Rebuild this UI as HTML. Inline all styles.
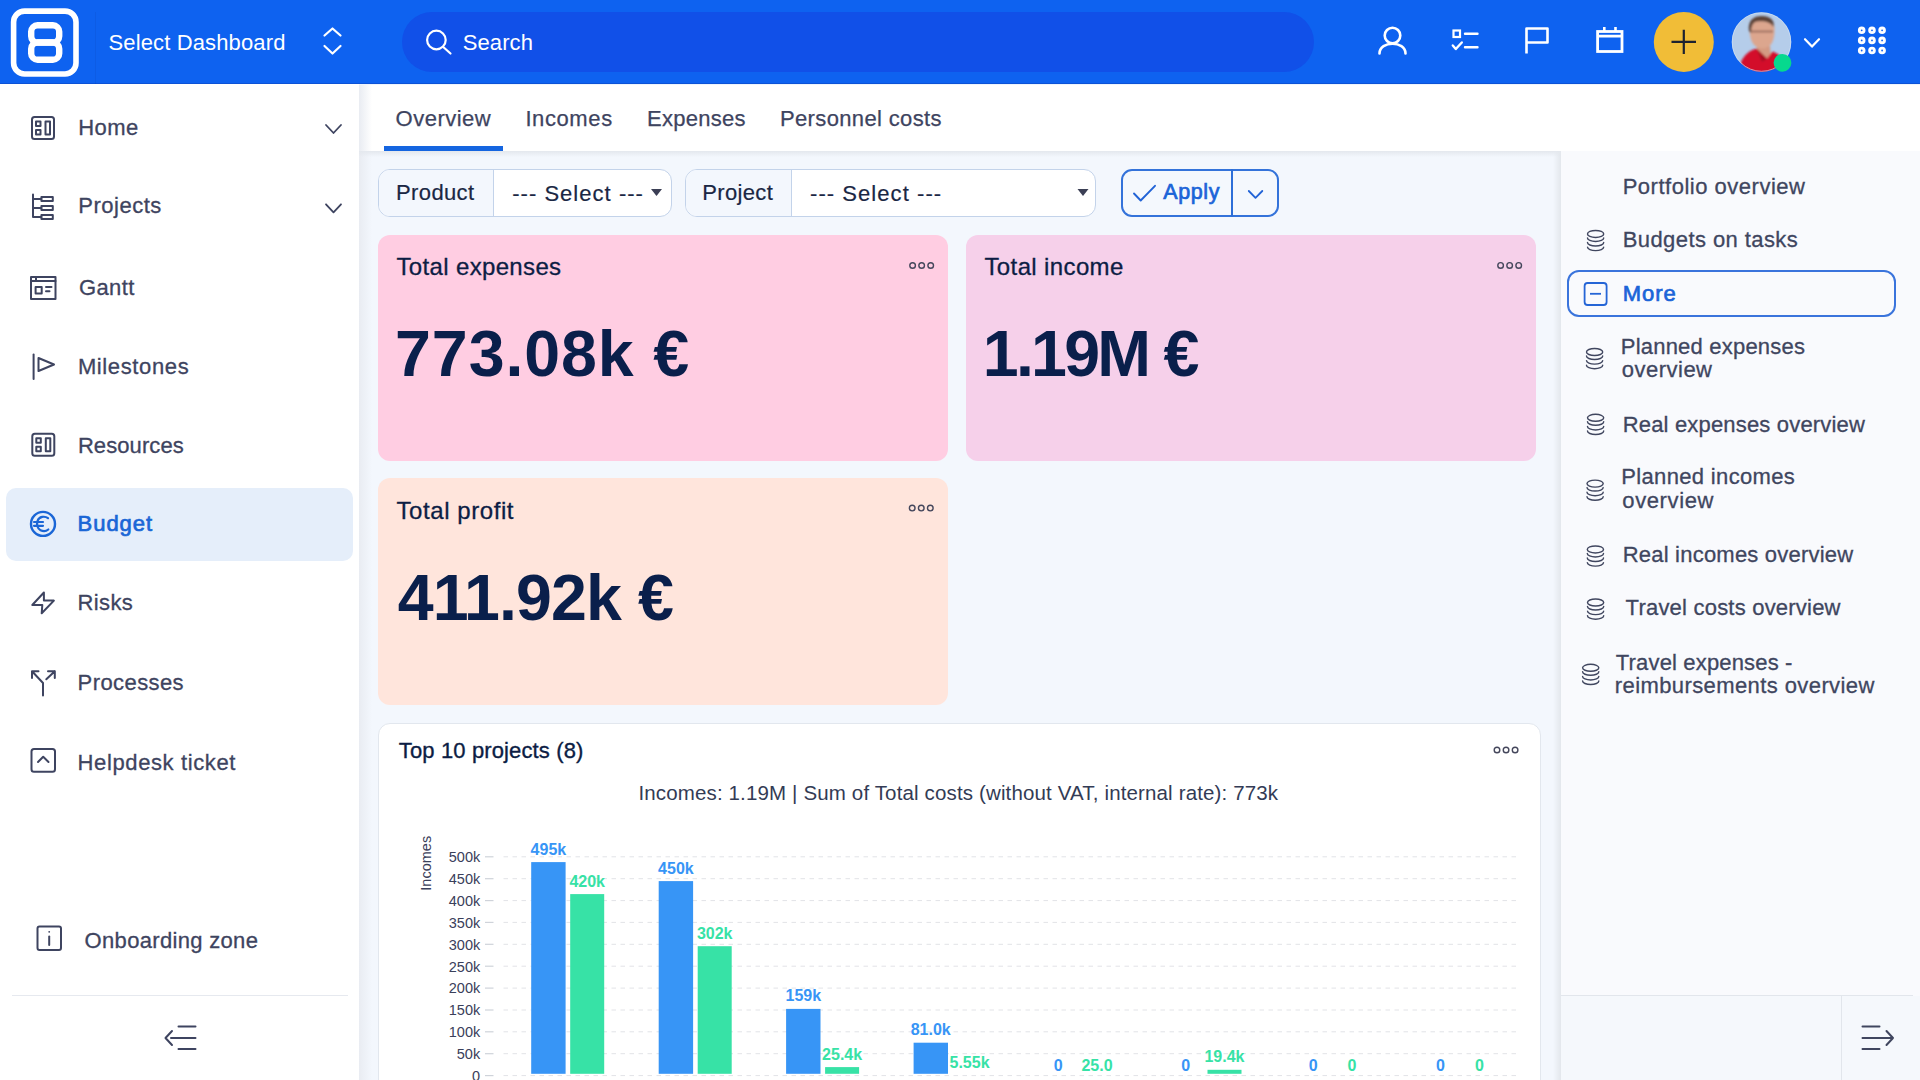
<!DOCTYPE html>
<html><head><meta charset="utf-8"><title>Budget Overview</title>
<style>
html,body{margin:0;padding:0;width:1920px;height:1080px;overflow:hidden;background:#f2f6fc;font-family:"Liberation Sans", sans-serif;}
.t{position:absolute;white-space:nowrap;line-height:1;}
.r{position:absolute;}
.s{position:absolute;overflow:visible;}
</style></head><body>
<div class="r" style="left:0px;top:84px;width:359px;height:996px;background:#ffffff;"></div><div class="r" style="left:359px;top:84px;width:1561px;height:67px;background:#ffffff;"></div><div class="r" style="left:359px;top:151px;width:1202px;height:929px;background:#f3f7fd;"></div><div class="r" style="left:1561px;top:151px;width:359px;height:929px;background:#f9fafd;"></div><div class="r" style="left:359px;top:84px;width:13px;height:996px;background:linear-gradient(90deg,#e9ecf2,rgba(242,246,252,0));"></div><div class="r" style="left:1553px;top:151px;width:8px;height:929px;background:linear-gradient(90deg,rgba(230,234,240,0),#e3e7ec);"></div><div class="r" style="left:0px;top:0px;width:1920px;height:84px;background:#0e62f0;"></div><div class="r" style="left:402px;top:12px;width:912px;height:60px;background:#1150e8;border-radius:30px;"></div><div class="r" style="left:0px;top:83px;width:1920px;height:1px;background:#0c52d6;"></div><div class="r" style="left:359px;top:84px;width:1561px;height:1px;background:#eef4fd;"></div><div class="r" style="left:95px;top:12px;width:1px;height:72px;background:rgba(0,20,90,0.07);"></div><svg class="s" style="left:0px;top:0px;" width="1920" height="84" viewBox="0 0 1920 84" fill="none"><rect x="13.6" y="11.1" width="62.4" height="62.9" rx="11" stroke="#fff" stroke-width="5.6"/><rect x="31.2" y="25.3" width="28" height="17.2" rx="6.3" stroke="#fff" stroke-width="6.4"/><rect x="31.2" y="42.5" width="28" height="17.2" rx="6.3" stroke="#fff" stroke-width="6.4"/><path d="M324.5 35.5 L332.5 28.5 L340.5 35.5 M324.5 46 L332.5 53.5 L340.5 46" stroke="#fff" stroke-width="2.2" stroke-linecap="round" stroke-linejoin="round"/><circle cx="436.4" cy="40" r="9.3" stroke="#fff" stroke-width="2.2"/><path d="M443.5 47.3 L450.5 53.5" stroke="#fff" stroke-width="2.2" stroke-linecap="round"/><circle cx="1392.5" cy="35.5" r="7.8" stroke="#fff" stroke-width="2.6"/><path d="M1379.5 53.5 C1379.5 40.5 1405.5 40.5 1405.5 53.5" stroke="#fff" stroke-width="2.6" stroke-linecap="round"/><rect x="1453.5" y="30.5" width="6.5" height="6.5" stroke="#fff" stroke-width="2.2"/><path d="M1465 33.8 H1477.5 M1465 47.2 H1477.5" stroke="#fff" stroke-width="2.4" stroke-linecap="round"/><path d="M1452.8 45.5 L1455.8 49 L1461.8 42.5" stroke="#fff" stroke-width="2.4" stroke-linecap="round" stroke-linejoin="round"/><path d="M1526.5 53.5 V28.5 H1547.5 V42.5 H1526.5" stroke="#fff" stroke-width="2.6" stroke-linejoin="round"/><rect x="1597.6" y="31.5" width="24.4" height="20" stroke="#fff" stroke-width="2.8"/><path d="M1598 36.1 H1622 M1604.3 27 V31 M1615.5 27 V31" stroke="#fff" stroke-width="2.6"/><circle cx="1683.8" cy="41.9" r="30" fill="#f1bd37"/><path d="M1671.5 41.9 H1696 M1683.8 29.7 V54.1" stroke="#1d2230" stroke-width="2.2"/><defs><clipPath id="av"><circle cx="1761.5" cy="42" r="29.8"/></clipPath></defs><defs><filter id="blr" x="-20%" y="-20%" width="140%" height="140%"><feGaussianBlur stdDeviation="0.9"/></filter></defs><g clip-path="url(#av)"><rect x="1730" y="10" width="64" height="64" fill="#b5cdea"/><g filter="url(#blr)"><path d="M1757 46 L1770 46 L1771 58 L1757 58 Z" fill="#d49a82"/><path d="M1749.5 30 C1749 20 1755 17 1762 17 C1770 17 1775 21 1774.5 30 C1774.5 40 1772 48 1762.5 48.5 C1753 48.5 1750 40 1749.5 30 Z" fill="#dca68e"/><path d="M1749 31 C1747.5 20 1754 15.8 1762 16 C1770 16.2 1775 20 1773.5 27 C1771 22 1764 20.5 1757 21.5 C1753 22 1751 26 1751 33 Z" fill="#5b4339"/><path d="M1751 31.5 H1773" stroke="#7a5246" stroke-width="1.6" opacity="0.8"/><path d="M1740 74 L1741 62 C1744 55 1750 50 1756.5 48.5 L1767 58.5 L1772.5 51.5 C1778 53 1783 58 1786 64 L1786 74 Z" fill="#d3112c"/><path d="M1756.5 48.5 L1767 58.5 L1762 62 Z" fill="#a80c22"/></g><circle cx="1761.5" cy="42" r="29.3" stroke="#cfe0f5" stroke-width="1" fill="none" opacity="0.7"/></g><circle cx="1782.5" cy="62.8" r="8.9" fill="#06d98e"/><path d="M1805 39.2 L1812 46.6 L1819 39.2" stroke="#fff" stroke-width="2.2" stroke-linecap="round" stroke-linejoin="round"/><circle cx="1861.7" cy="30.3" r="2.35" stroke="#fff" stroke-width="2.9"/><circle cx="1861.7" cy="40.4" r="2.35" stroke="#fff" stroke-width="2.9"/><circle cx="1861.7" cy="50.5" r="2.35" stroke="#fff" stroke-width="2.9"/><circle cx="1872" cy="30.3" r="2.35" stroke="#fff" stroke-width="2.9"/><circle cx="1872" cy="40.4" r="2.35" stroke="#fff" stroke-width="2.9"/><circle cx="1872" cy="50.5" r="2.35" stroke="#fff" stroke-width="2.9"/><circle cx="1882.1" cy="30.3" r="2.35" stroke="#fff" stroke-width="2.9"/><circle cx="1882.1" cy="40.4" r="2.35" stroke="#fff" stroke-width="2.9"/><circle cx="1882.1" cy="50.5" r="2.35" stroke="#fff" stroke-width="2.9"/></svg><div class="t" style="left:108.50px;top:31.88px;font-size:22px;color:#ffffff;font-weight:400;letter-spacing:0.133px;">Select Dashboard</div><div class="t" style="left:462.70px;top:31.58px;font-size:22px;color:#ffffff;font-weight:400;letter-spacing:0.100px;">Search</div><div class="r" style="left:6px;top:488px;width:347px;height:73px;background:#e5eefa;border-radius:10px;"></div><div class="t" style="left:78.30px;top:117.38px;font-size:22px;color:#3e4460;font-weight:400;letter-spacing:0.400px;-webkit-text-stroke:0.3px #3e4460;">Home</div><div class="t" style="left:78.30px;top:195.48px;font-size:22px;color:#3e4460;font-weight:400;letter-spacing:0.500px;-webkit-text-stroke:0.3px #3e4460;">Projects</div><div class="t" style="left:78.90px;top:277.28px;font-size:22px;color:#3e4460;font-weight:400;letter-spacing:0.425px;-webkit-text-stroke:0.3px #3e4460;">Gantt</div><div class="t" style="left:77.90px;top:355.88px;font-size:22px;color:#3e4460;font-weight:400;letter-spacing:0.622px;-webkit-text-stroke:0.3px #3e4460;">Milestones</div><div class="t" style="left:77.90px;top:434.88px;font-size:22px;color:#3e4460;font-weight:400;letter-spacing:0.087px;-webkit-text-stroke:0.3px #3e4460;">Resources</div><div class="t" style="left:77.60px;top:513.38px;font-size:22px;color:#1a66d6;font-weight:400;letter-spacing:0.960px;-webkit-text-stroke:0.7px #1a66d6;">Budget</div><div class="t" style="left:77.60px;top:591.88px;font-size:22px;color:#3e4460;font-weight:400;letter-spacing:0.350px;-webkit-text-stroke:0.3px #3e4460;">Risks</div><div class="t" style="left:77.60px;top:671.68px;font-size:22px;color:#3e4460;font-weight:400;letter-spacing:0.413px;-webkit-text-stroke:0.3px #3e4460;">Processes</div><div class="t" style="left:77.60px;top:751.88px;font-size:22px;color:#3e4460;font-weight:400;letter-spacing:0.614px;-webkit-text-stroke:0.3px #3e4460;">Helpdesk ticket</div><div class="t" style="left:84.60px;top:930.08px;font-size:22px;color:#3e4460;font-weight:400;letter-spacing:0.321px;-webkit-text-stroke:0.3px #3e4460;">Onboarding zone</div><svg class="s" style="left:0px;top:84px;" width="359" height="996" viewBox="0 84 359 996" fill="none"><rect x="32" y="117" width="22" height="22" rx="2.5" stroke="#3e4460" stroke-width="2" stroke-linecap="round" stroke-linejoin="round"/><rect x="36" y="121.5" width="4.5" height="4.5" stroke="#3e4460" stroke-width="2" stroke-linecap="round" stroke-linejoin="round"/><rect x="36" y="130" width="4.5" height="4.5" stroke="#3e4460" stroke-width="2" stroke-linecap="round" stroke-linejoin="round"/><rect x="45.5" y="121.5" width="4.5" height="13" stroke="#3e4460" stroke-width="2" stroke-linecap="round" stroke-linejoin="round"/><rect x="32.3" y="433.7" width="22" height="22" rx="2.5" stroke="#3e4460" stroke-width="2" stroke-linecap="round" stroke-linejoin="round"/><rect x="36.3" y="438.2" width="4.5" height="4.5" stroke="#3e4460" stroke-width="2" stroke-linecap="round" stroke-linejoin="round"/><rect x="36.3" y="446.7" width="4.5" height="4.5" stroke="#3e4460" stroke-width="2" stroke-linecap="round" stroke-linejoin="round"/><rect x="45.8" y="438.2" width="4.5" height="13" stroke="#3e4460" stroke-width="2" stroke-linecap="round" stroke-linejoin="round"/><path d="M33 194.5 V217 H41.4 M33 199 H41.4 M33 208 H41.4" stroke="#3e4460" stroke-width="2" stroke-linecap="round" stroke-linejoin="round"/><rect x="41.4" y="197" width="11.4" height="4" stroke="#3e4460" stroke-width="2" stroke-linecap="round" stroke-linejoin="round"/><rect x="41.4" y="206" width="11.4" height="4" stroke="#3e4460" stroke-width="2" stroke-linecap="round" stroke-linejoin="round"/><rect x="41.4" y="215.1" width="11.4" height="3.8" stroke="#3e4460" stroke-width="2" stroke-linecap="round" stroke-linejoin="round"/><rect x="31" y="277" width="24.5" height="22" stroke="#3e4460" stroke-width="2" stroke-linecap="round" stroke-linejoin="round"/><path d="M31 281 H55.5 M36 277 V281" stroke="#3e4460" stroke-width="2" stroke-linecap="round" stroke-linejoin="round"/><rect x="35.6" y="287" width="6.1" height="6.4" stroke="#3e4460" stroke-width="2" stroke-linecap="round" stroke-linejoin="round"/><path d="M46 286.9 H51.5 M46 291.3 H49.5" stroke="#3e4460" stroke-width="2" stroke-linecap="round"/><path d="M33.6 354.5 V379" stroke="#3e4460" stroke-width="2" stroke-linecap="round" stroke-linejoin="round"/><path d="M38.5 358 L54 364.5 L38.5 371 Z" stroke="#3e4460" stroke-width="2" stroke-linecap="round" stroke-linejoin="round"/><circle cx="43" cy="523.9" r="12" stroke="#1a66d6" stroke-width="2.4"/><path d="M48 518.2 C45 515.8 39 516.2 37.5 521 C36.5 524 37 528.5 40.5 530.2 C43 531.4 46.5 531 48.3 529.5 M34 522 H43 M34 525.8 H43" stroke="#1a66d6" stroke-width="2.2" stroke-linecap="round"/><path d="M43.9 592.5 L32.3 605 H42.3 L41.7 613.3 L53.9 600.6 H43.9 Z" stroke="#3e4460" stroke-width="2" stroke-linecap="round" stroke-linejoin="round"/><path d="M43 695.5 V683 L32 671.3 M32 678 V671.3 H38.5 M46.3 679.3 L54.8 671.3 M48 671.3 H54.8 V678" stroke="#3e4460" stroke-width="2" stroke-linecap="round" stroke-linejoin="round"/><rect x="31.5" y="749" width="23.5" height="22.7" rx="2.5" stroke="#3e4460" stroke-width="2" stroke-linecap="round" stroke-linejoin="round"/><path d="M38 762 L43.2 756.8 L48.5 762" stroke="#3e4460" stroke-width="2" stroke-linecap="round" stroke-linejoin="round"/><rect x="37.5" y="926.5" width="23.5" height="23.5" rx="2" stroke="#3e4460" stroke-width="2" stroke-linecap="round" stroke-linejoin="round"/><path d="M49.2 936.5 V945" stroke="#3e4460" stroke-width="2" stroke-linecap="round" stroke-linejoin="round"/><circle cx="49.2" cy="931.8" r="0.9" fill="#3e4460"/><path d="M326 125 L333.5 133 L341 125 M326 204.3 L333.5 212.3 L341 204.3" stroke="#3e4460" stroke-width="1.8" stroke-linecap="round" stroke-linejoin="round"/><path d="M178.5 1026.5 H195.5 M171 1038 H195.5 M178.5 1049 H195.5 M172 1031 L165.5 1038 L172 1045" stroke="#3e4460" stroke-width="2" stroke-linecap="round" stroke-linejoin="round"/></svg><div class="r" style="left:12px;top:995px;width:336px;height:1px;background:#e6e9ef;"></div><div class="t" style="left:395.60px;top:107.88px;font-size:22px;color:#3e4460;font-weight:400;letter-spacing:0.486px;-webkit-text-stroke:0.25px #3e4460;">Overview</div><div class="t" style="left:525.40px;top:107.88px;font-size:22px;color:#3e4460;font-weight:400;letter-spacing:0.600px;-webkit-text-stroke:0.25px #3e4460;">Incomes</div><div class="t" style="left:647.00px;top:107.88px;font-size:22px;color:#3e4460;font-weight:400;letter-spacing:0.286px;-webkit-text-stroke:0.25px #3e4460;">Expenses</div><div class="t" style="left:780.00px;top:107.88px;font-size:22px;color:#3e4460;font-weight:400;letter-spacing:0.357px;-webkit-text-stroke:0.25px #3e4460;">Personnel costs</div><div class="r" style="left:359px;top:151px;width:1202px;height:6px;background:linear-gradient(#e4e8ee,rgba(243,247,253,0));"></div><div class="r" style="left:384px;top:146px;width:119px;height:5px;background:#1565e0;"></div><div class="r" style="left:378px;top:169px;width:292px;height:46px;border:1px solid #c3d3ea;border-radius:12px;background:#fff;overflow:hidden;"><div style="position:absolute;left:0;top:0;width:114.39999999999998px;height:46px;background:#f3f7fd;border-right:1px solid #c3d3ea;"></div></div><div class="t" style="left:396.00px;top:182.28px;font-size:22px;color:#1a2744;font-weight:400;letter-spacing:0.383px;-webkit-text-stroke:0.2px #1a2744;">Product</div><div class="t" style="left:512.20px;top:183.28px;font-size:22px;color:#1a2744;font-weight:400;letter-spacing:1.031px;-webkit-text-stroke:0.2px #1a2744;">--- Select ---</div><svg class="s" style="left:0px;top:0px;" width="1920" height="1080" viewBox="0 0 1920 1080" fill="none"><path d="M651 189 H662 L656.5 196 Z" fill="#3b3f55"/></svg><div class="r" style="left:684.5px;top:169px;width:409.5px;height:46px;border:1px solid #c3d3ea;border-radius:12px;background:#fff;overflow:hidden;"><div style="position:absolute;left:0;top:0;width:105.79999999999995px;height:46px;background:#f3f7fd;border-right:1px solid #c3d3ea;"></div></div><div class="t" style="left:702.20px;top:182.28px;font-size:22px;color:#1a2744;font-weight:400;letter-spacing:0.350px;-webkit-text-stroke:0.2px #1a2744;">Project</div><div class="t" style="left:810.00px;top:183.28px;font-size:22px;color:#1a2744;font-weight:400;letter-spacing:1.062px;-webkit-text-stroke:0.2px #1a2744;">--- Select ---</div><svg class="s" style="left:0px;top:0px;" width="1920" height="1080" viewBox="0 0 1920 1080" fill="none"><path d="M1077.5 189 H1088.5 L1083.0 196 Z" fill="#3b3f55"/></svg><div class="r" style="left:1121px;top:169px;width:154px;height:44px;border:2px solid #3473da;border-radius:11px;background:#f4f8fd;"></div><div class="r" style="left:1231px;top:169px;width:2px;height:48px;background:#2d6fd8;"></div><svg class="s" style="left:0px;top:0px;" width="1920" height="1080" viewBox="0 0 1920 1080" fill="none"><path d="M1134 193.5 L1140.7 200.5 L1155 185.8" stroke="#2163d6" stroke-width="1.9" stroke-linecap="round" stroke-linejoin="round"/><path d="M1248.8 191 L1255.5 197.8 L1262.3 191" stroke="#2163d6" stroke-width="1.8" stroke-linecap="round" stroke-linejoin="round"/></svg><div class="t" style="left:1163.20px;top:182.40px;font-size:21.5px;color:#1b64d8;font-weight:400;letter-spacing:0.625px;-webkit-text-stroke:0.7px #1b64d8;">Apply</div><div class="r" style="left:378px;top:235px;width:570px;height:226px;background:#ffcde2;border-radius:12px;"></div><div class="t" style="left:396.50px;top:255.18px;font-size:24px;color:#0c1d44;font-weight:400;letter-spacing:0.346px;-webkit-text-stroke:0.3px #0c1d44;">Total expenses</div><div class="t" style="left:395.10px;top:322.40px;font-size:64.5px;color:#0a1f4b;font-weight:700;letter-spacing:0.900px;">773.08k €</div><svg class="s" style="left:0px;top:0px;" width="1920" height="1080" viewBox="0 0 1920 1080" fill="none"><circle cx="912.60" cy="265.5" r="2.8" stroke="#45475c" stroke-width="1.4"/><circle cx="921.65" cy="265.5" r="2.8" stroke="#45475c" stroke-width="1.4"/><circle cx="930.70" cy="265.5" r="2.8" stroke="#45475c" stroke-width="1.4"/></svg><div class="r" style="left:966px;top:235px;width:570px;height:226px;background:#f6d0ea;border-radius:12px;"></div><div class="t" style="left:984.50px;top:255.18px;font-size:24px;color:#0c1d44;font-weight:400;letter-spacing:0.373px;-webkit-text-stroke:0.3px #0c1d44;">Total income</div><div class="t" style="left:982.80px;top:322.40px;font-size:64.5px;color:#0a1f4b;font-weight:700;letter-spacing:-2.750px;">1.19M €</div><svg class="s" style="left:0px;top:0px;" width="1920" height="1080" viewBox="0 0 1920 1080" fill="none"><circle cx="1500.60" cy="265.4" r="2.8" stroke="#45475c" stroke-width="1.4"/><circle cx="1509.65" cy="265.4" r="2.8" stroke="#45475c" stroke-width="1.4"/><circle cx="1518.70" cy="265.4" r="2.8" stroke="#45475c" stroke-width="1.4"/></svg><div class="r" style="left:378px;top:478px;width:570px;height:227px;background:#ffe5dc;border-radius:12px;"></div><div class="t" style="left:396.50px;top:498.93px;font-size:24px;color:#0c1d44;font-weight:400;letter-spacing:0.568px;-webkit-text-stroke:0.3px #0c1d44;">Total profit</div><div class="t" style="left:397.75px;top:566.10px;font-size:64.5px;color:#0a1f4b;font-weight:700;letter-spacing:-0.919px;">411.92k €</div><svg class="s" style="left:0px;top:0px;" width="1920" height="1080" viewBox="0 0 1920 1080" fill="none"><circle cx="912.20" cy="508.1" r="2.8" stroke="#45475c" stroke-width="1.4"/><circle cx="921.25" cy="508.1" r="2.8" stroke="#45475c" stroke-width="1.4"/><circle cx="930.30" cy="508.1" r="2.8" stroke="#45475c" stroke-width="1.4"/></svg><div class="r" style="left:378px;top:723px;width:1161px;height:400px;background:#fff;border:1px solid #e2e7ee;border-radius:12px;"></div><div class="t" style="left:398.80px;top:739.68px;font-size:22px;color:#0c1d44;font-weight:400;letter-spacing:0.133px;-webkit-text-stroke:0.35px #0c1d44;">Top 10 projects (8)</div><svg class="s" style="left:0px;top:0px;" width="1920" height="1080" viewBox="0 0 1920 1080" fill="none"><circle cx="1497.00" cy="750" r="2.8" stroke="#45475c" stroke-width="1.4"/><circle cx="1506.05" cy="750" r="2.8" stroke="#45475c" stroke-width="1.4"/><circle cx="1515.10" cy="750" r="2.8" stroke="#45475c" stroke-width="1.4"/></svg><div class="t" style="left:638.40px;top:782.65px;font-size:20.5px;color:#333b55;font-weight:400;letter-spacing:0.145px;">Incomes: 1.19M | Sum of Total costs (without VAT, internal rate): 773k</div><svg class="s" style="left:0px;top:0px;" width="1920" height="1080" viewBox="0 0 1920 1080" fill="none"><path d="M485 856.8 H493.5" stroke="#cfd3da" stroke-width="1.2"/><path d="M503.5 856.8 H1517" stroke="#e2e3e7" stroke-width="1" stroke-dasharray="4.5 4.5"/><path d="M485 878.7 H493.5" stroke="#cfd3da" stroke-width="1.2"/><path d="M503.5 878.7 H1517" stroke="#e2e3e7" stroke-width="1" stroke-dasharray="4.5 4.5"/><path d="M485 900.6 H493.5" stroke="#cfd3da" stroke-width="1.2"/><path d="M503.5 900.6 H1517" stroke="#e2e3e7" stroke-width="1" stroke-dasharray="4.5 4.5"/><path d="M485 922.4 H493.5" stroke="#cfd3da" stroke-width="1.2"/><path d="M503.5 922.4 H1517" stroke="#e2e3e7" stroke-width="1" stroke-dasharray="4.5 4.5"/><path d="M485 944.3 H493.5" stroke="#cfd3da" stroke-width="1.2"/><path d="M503.5 944.3 H1517" stroke="#e2e3e7" stroke-width="1" stroke-dasharray="4.5 4.5"/><path d="M485 966.2 H493.5" stroke="#cfd3da" stroke-width="1.2"/><path d="M503.5 966.2 H1517" stroke="#e2e3e7" stroke-width="1" stroke-dasharray="4.5 4.5"/><path d="M485 988.1 H493.5" stroke="#cfd3da" stroke-width="1.2"/><path d="M503.5 988.1 H1517" stroke="#e2e3e7" stroke-width="1" stroke-dasharray="4.5 4.5"/><path d="M485 1010.0 H493.5" stroke="#cfd3da" stroke-width="1.2"/><path d="M503.5 1010.0 H1517" stroke="#e2e3e7" stroke-width="1" stroke-dasharray="4.5 4.5"/><path d="M485 1031.8 H493.5" stroke="#cfd3da" stroke-width="1.2"/><path d="M503.5 1031.8 H1517" stroke="#e2e3e7" stroke-width="1" stroke-dasharray="4.5 4.5"/><path d="M485 1053.7 H493.5" stroke="#cfd3da" stroke-width="1.2"/><path d="M503.5 1053.7 H1517" stroke="#e2e3e7" stroke-width="1" stroke-dasharray="4.5 4.5"/><path d="M485 1075.6 H493.5" stroke="#cfd3da" stroke-width="1.2"/><path d="M503.5 1075.6 H1517" stroke="#e2e3e7" stroke-width="1" stroke-dasharray="4.5 4.5"/></svg><div class="t" style="left:448.8px;top:850.1px;font-size:14.5px;color:#3a405a;font-weight:400;">500k</div><div class="t" style="left:448.8px;top:872.0px;font-size:14.5px;color:#3a405a;font-weight:400;">450k</div><div class="t" style="left:448.8px;top:893.9px;font-size:14.5px;color:#3a405a;font-weight:400;">400k</div><div class="t" style="left:448.8px;top:915.8px;font-size:14.5px;color:#3a405a;font-weight:400;">350k</div><div class="t" style="left:448.8px;top:937.6px;font-size:14.5px;color:#3a405a;font-weight:400;">300k</div><div class="t" style="left:448.8px;top:959.5px;font-size:14.5px;color:#3a405a;font-weight:400;">250k</div><div class="t" style="left:448.8px;top:981.4px;font-size:14.5px;color:#3a405a;font-weight:400;">200k</div><div class="t" style="left:448.8px;top:1003.3px;font-size:14.5px;color:#3a405a;font-weight:400;">150k</div><div class="t" style="left:448.8px;top:1025.2px;font-size:14.5px;color:#3a405a;font-weight:400;">100k</div><div class="t" style="left:456.8px;top:1047.0px;font-size:14.5px;color:#3a405a;font-weight:400;">50k</div><div class="t" style="left:472.1px;top:1068.9px;font-size:14.5px;color:#3a405a;font-weight:400;">0</div><div class="t" style="left:398px;top:856px;width:56px;font-size:14.5px;color:#3a405a;transform:rotate(-90deg);transform-origin:center;text-align:center;">Incomes</div><svg class="s" style="left:0px;top:0px;" width="1920" height="1080" viewBox="0 0 1920 1080" fill="none"><rect x="531.2" y="862.1" width="34.4" height="211.7" fill="#3795f6"/><rect x="570.2" y="894.1" width="34" height="179.7" fill="#37e2a6"/><rect x="658.7" y="881.1" width="34.4" height="192.7" fill="#3795f6"/><rect x="697.7" y="946.2" width="34" height="127.6" fill="#37e2a6"/><rect x="786.1" y="1008.9" width="34.4" height="64.9" fill="#3795f6"/><rect x="825.1" y="1067.1" width="34" height="6.7" fill="#37e2a6"/><rect x="913.6" y="1042.7" width="34.4" height="31.1" fill="#3795f6"/><rect x="1207.5" y="1069.8" width="34" height="4.0" fill="#37e2a6"/></svg><div class="t" style="left:530.6px;top:841.5px;font-size:16px;color:#3795f6;font-weight:700;">495k</div><div class="t" style="left:569.4px;top:873.5px;font-size:16px;color:#37e2a6;font-weight:700;">420k</div><div class="t" style="left:658.1px;top:860.5px;font-size:16px;color:#3795f6;font-weight:700;">450k</div><div class="t" style="left:696.9px;top:925.6px;font-size:16px;color:#37e2a6;font-weight:700;">302k</div><div class="t" style="left:785.5px;top:988.3px;font-size:16px;color:#3795f6;font-weight:700;">159k</div><div class="t" style="left:822.1px;top:1046.5px;font-size:16px;color:#37e2a6;font-weight:700;">25.4k</div><div class="t" style="left:910.7px;top:1022.1px;font-size:16px;color:#3795f6;font-weight:700;">81.0k</div><div class="t" style="left:949.5px;top:1055.2px;font-size:16px;color:#37e2a6;font-weight:700;">5.55k</div><div class="t" style="left:1053.8px;top:1058.2px;font-size:16px;color:#3795f6;font-weight:700;">0</div><div class="t" style="left:1081.4px;top:1058.2px;font-size:16px;color:#37e2a6;font-weight:700;">25.0</div><div class="t" style="left:1181.2px;top:1058.2px;font-size:16px;color:#3795f6;font-weight:700;">0</div><div class="t" style="left:1204.4px;top:1049.2px;font-size:16px;color:#37e2a6;font-weight:700;">19.4k</div><div class="t" style="left:1308.7px;top:1058.2px;font-size:16px;color:#3795f6;font-weight:700;">0</div><div class="t" style="left:1347.5px;top:1058.2px;font-size:16px;color:#37e2a6;font-weight:700;">0</div><div class="t" style="left:1436.1px;top:1058.2px;font-size:16px;color:#3795f6;font-weight:700;">0</div><div class="t" style="left:1474.9px;top:1058.2px;font-size:16px;color:#37e2a6;font-weight:700;">0</div><svg class="s" style="left:0px;top:0px;" width="1920" height="1080" viewBox="0 0 1920 1080" fill="none"><ellipse cx="1595.6" cy="233.9" rx="8.1" ry="3.5" stroke="#40465f" stroke-width="1.45"/><path d="M1587.5 237.90 A8.1 3.5 0 0 0 1603.6999999999998 237.90 M1587.5 242.50 A8.1 3.5 0 0 0 1603.6999999999998 242.50 M1587.5 247.10 A8.1 3.5 0 0 0 1603.6999999999998 247.10 " stroke="#40465f" stroke-width="1.45" stroke-linecap="round"/><ellipse cx="1594.6" cy="352" rx="8.1" ry="3.5" stroke="#40465f" stroke-width="1.45"/><path d="M1586.5 356.00 A8.1 3.5 0 0 0 1602.6999999999998 356.00 M1586.5 360.60 A8.1 3.5 0 0 0 1602.6999999999998 360.60 M1586.5 365.20 A8.1 3.5 0 0 0 1602.6999999999998 365.20 " stroke="#40465f" stroke-width="1.45" stroke-linecap="round"/><ellipse cx="1595.6" cy="417.8" rx="8.1" ry="3.5" stroke="#40465f" stroke-width="1.45"/><path d="M1587.5 421.80 A8.1 3.5 0 0 0 1603.6999999999998 421.80 M1587.5 426.40 A8.1 3.5 0 0 0 1603.6999999999998 426.40 M1587.5 431.00 A8.1 3.5 0 0 0 1603.6999999999998 431.00 " stroke="#40465f" stroke-width="1.45" stroke-linecap="round"/><ellipse cx="1595.1" cy="483.6" rx="8.1" ry="3.5" stroke="#40465f" stroke-width="1.45"/><path d="M1587.0 487.60 A8.1 3.5 0 0 0 1603.1999999999998 487.60 M1587.0 492.20 A8.1 3.5 0 0 0 1603.1999999999998 492.20 M1587.0 496.80 A8.1 3.5 0 0 0 1603.1999999999998 496.80 " stroke="#40465f" stroke-width="1.45" stroke-linecap="round"/><ellipse cx="1595.4" cy="549.4" rx="8.1" ry="3.5" stroke="#40465f" stroke-width="1.45"/><path d="M1587.3000000000002 553.40 A8.1 3.5 0 0 0 1603.5 553.40 M1587.3000000000002 558.00 A8.1 3.5 0 0 0 1603.5 558.00 M1587.3000000000002 562.60 A8.1 3.5 0 0 0 1603.5 562.60 " stroke="#40465f" stroke-width="1.45" stroke-linecap="round"/><ellipse cx="1595.6" cy="602.5" rx="8.1" ry="3.5" stroke="#40465f" stroke-width="1.45"/><path d="M1587.5 606.50 A8.1 3.5 0 0 0 1603.6999999999998 606.50 M1587.5 611.10 A8.1 3.5 0 0 0 1603.6999999999998 611.10 M1587.5 615.70 A8.1 3.5 0 0 0 1603.6999999999998 615.70 " stroke="#40465f" stroke-width="1.45" stroke-linecap="round"/><ellipse cx="1590.7" cy="667.8" rx="8.1" ry="3.5" stroke="#40465f" stroke-width="1.45"/><path d="M1582.6000000000001 671.80 A8.1 3.5 0 0 0 1598.8 671.80 M1582.6000000000001 676.40 A8.1 3.5 0 0 0 1598.8 676.40 M1582.6000000000001 681.00 A8.1 3.5 0 0 0 1598.8 681.00 " stroke="#40465f" stroke-width="1.45" stroke-linecap="round"/><rect x="1584.6" y="283" width="22" height="22" rx="3" stroke="#2565d6" stroke-width="1.8"/><path d="M1590 293.8 H1601" stroke="#2565d6" stroke-width="1.8"/></svg><div class="r" style="left:1567px;top:270px;width:325px;height:43px;border:2px solid #3a74dc;border-radius:12px;"></div><div class="t" style="left:1622.70px;top:176.08px;font-size:22px;color:#40465f;font-weight:400;letter-spacing:0.506px;-webkit-text-stroke:0.3px #40465f;">Portfolio overview</div><div class="t" style="left:1622.70px;top:228.88px;font-size:22px;color:#40465f;font-weight:400;letter-spacing:0.420px;-webkit-text-stroke:0.3px #40465f;">Budgets on tasks</div><div class="t" style="left:1622.70px;top:282.88px;font-size:22px;color:#1b64d8;font-weight:400;letter-spacing:1.000px;-webkit-text-stroke:0.7px #1b64d8;">More</div><div class="t" style="left:1620.80px;top:335.78px;font-size:22px;color:#40465f;font-weight:400;letter-spacing:0.207px;-webkit-text-stroke:0.3px #40465f;">Planned expenses</div><div class="t" style="left:1621.80px;top:359.38px;font-size:22px;color:#40465f;font-weight:400;letter-spacing:0.486px;-webkit-text-stroke:0.3px #40465f;">overview</div><div class="t" style="left:1622.70px;top:413.58px;font-size:22px;color:#40465f;font-weight:400;letter-spacing:0.176px;-webkit-text-stroke:0.3px #40465f;">Real expenses overview</div><div class="t" style="left:1621.30px;top:466.28px;font-size:22px;color:#40465f;font-weight:400;letter-spacing:0.336px;-webkit-text-stroke:0.3px #40465f;">Planned incomes</div><div class="t" style="left:1622.30px;top:489.88px;font-size:22px;color:#40465f;font-weight:400;letter-spacing:0.614px;-webkit-text-stroke:0.3px #40465f;">overview</div><div class="t" style="left:1622.70px;top:544.08px;font-size:22px;color:#40465f;font-weight:400;letter-spacing:0.215px;-webkit-text-stroke:0.3px #40465f;">Real incomes overview</div><div class="t" style="left:1625.60px;top:597.48px;font-size:22px;color:#40465f;font-weight:400;letter-spacing:0.210px;-webkit-text-stroke:0.3px #40465f;">Travel costs overview</div><div class="t" style="left:1615.80px;top:651.88px;font-size:22px;color:#40465f;font-weight:400;letter-spacing:0.163px;-webkit-text-stroke:0.3px #40465f;">Travel expenses -</div><div class="t" style="left:1614.80px;top:675.18px;font-size:22px;color:#40465f;font-weight:400;letter-spacing:0.405px;-webkit-text-stroke:0.3px #40465f;">reimbursements overview</div><div class="r" style="left:1561px;top:996px;width:359px;height:84px;background:#f5f8fc;"></div><div class="r" style="left:1561px;top:995px;width:352px;height:1px;background:#e2e6ec;"></div><div class="r" style="left:1841px;top:996px;width:1px;height:84px;background:#e2e6ec;"></div><svg class="s" style="left:0px;top:0px;" width="1920" height="1080" viewBox="0 0 1920 1080" fill="none"><path d="M1862.5 1026.5 H1879.5 M1862.5 1038 H1893 M1862.5 1049 H1879.5 M1886.5 1031 L1893 1038 L1886.5 1045" stroke="#40465f" stroke-width="2" stroke-linecap="round" stroke-linejoin="round"/></svg>
</body></html>
